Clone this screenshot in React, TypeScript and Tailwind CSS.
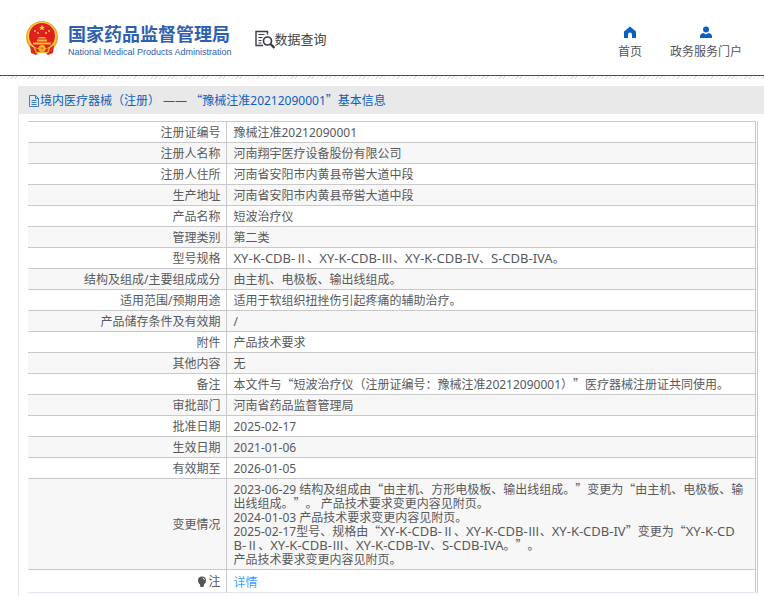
import { Fragment } from "react";
import type { ReactNode } from "react";

interface DetailRow {
  label: string;
  lines: string[];
}

const rows: DetailRow[] = [
  { label: "注册证编号", lines: ["豫械注准20212090001"] },
  { label: "注册人名称", lines: ["河南翔宇医疗设备股份有限公司"] },
  { label: "注册人住所", lines: ["河南省安阳市内黄县帝喾大道中段"] },
  { label: "生产地址", lines: ["河南省安阳市内黄县帝喾大道中段"] },
  { label: "产品名称", lines: ["短波治疗仪"] },
  { label: "管理类别", lines: ["第二类"] },
  { label: "型号规格", lines: ["XY-K-CDB-Ⅱ、XY-K-CDB-Ⅲ、XY-K-CDB-IV、S-CDB-IVA。"] },
  { label: "结构及组成/主要组成成分", lines: ["由主机、电极板、输出线组成。"] },
  { label: "适用范围/预期用途", lines: ["适用于软组织扭挫伤引起疼痛的辅助治疗。"] },
  { label: "产品储存条件及有效期", lines: ["/"] },
  { label: "附件", lines: ["产品技术要求"] },
  { label: "其他内容", lines: ["无"] },
  { label: "备注", lines: ["本文件与“短波治疗仪（注册证编号：豫械注准20212090001）”医疗器械注册证共同使用。"] },
  { label: "审批部门", lines: ["河南省药品监督管理局"] },
  { label: "批准日期", lines: ["2025-02-17"] },
  { label: "生效日期", lines: ["2021-01-06"] },
  { label: "有效期至", lines: ["2026-01-05"] },
  {
    label: "变更情况",
    lines: [
      "2023-06-29 结构及组成由“由主机、方形电极板、输出线组成。”变更为“由主机、电极板、输出线组成。”。 产品技术要求变更内容见附页。",
      "2024-01-03 产品技术要求变更内容见附页。",
      "2025-02-17型号、规格由“XY-K-CDB-Ⅱ、XY-K-CDB-Ⅲ、XY-K-CDB-IV”变更为“XY-K-CD\nB-Ⅱ、XY-K-CDB-Ⅲ、XY-K-CDB-IV、S-CDB-IVA。”。",
      "产品技术要求变更内容见附页。",
    ],
  },
];

// Curly quotes are full width in Chinese text, so they take the CJK face.
// Model codes are set one size up to sit level with the characters.
function Zh({ text }: { text: string }) {
  return (
    <>
      {text.split(/([“”Ⅱ]|[A-Z][A-Z-]*)/).map((part, i) => {
        if (part === "“" || part === "”" || part === "Ⅱ") {
          return (
            <span key={i} className="font-['Noto_Sans_CJK_SC',sans-serif] leading-[0px]">{part}</span>
          );
        }
        if (/^[A-Z]/.test(part)) {
          return <span key={i} className="text-[13px] leading-[0px]">{part}</span>;
        }
        return <Fragment key={i}>{part}</Fragment>;
      })}
    </>
  );
}

function Emblem() {
  return (
    <svg viewBox="0 0 34 36" className="w-[34px] h-9 shrink-0" aria-hidden="true">
      <circle cx="17" cy="17" r="16" fill="#efa51f" />
      <circle cx="17" cy="16.500" r="14.500" fill="#f8cf57" />
      <circle cx="17" cy="16" r="13" fill="#e0201b" />
      <path d="M17 5l.8 1.800 2 .2-1.500 1.300.5 2-1.800-1-1.800 1 .5-2L14.200 7l2-.2z" fill="#fbd84b" />
      <g fill="#fbd84b">
        <circle cx="10" cy="11" r=".9" />
        <circle cx="13" cy="13" r=".9" />
        <circle cx="21" cy="13" r=".9" />
        <circle cx="24" cy="11" r=".9" />
      </g>
      <path d="M14 17h6l1 1.500h-8zM12 19.500h10v2H12zM8 22.500h18v2H8z" fill="#f6b93a" />
      <path d="M5 25c3 3 7 4 12 4s9-1 12-4l-1 8-5 2-3-3h-6l-3 3-5-2z" fill="#dc2a1c" />
      <circle cx="17" cy="28.500" r="3.600" fill="#f3b632" />
      <circle cx="17" cy="28.500" r="1.600" fill="#e8821f" />
      <path d="M9.500 28l2 5M24.500 28l-2 5M12 32.500h10" stroke="#f3b632" strokeWidth="1.200" fill="none" />
    </svg>
  );
}

function SearchDocIcon() {
  return (
    <svg viewBox="0 0 20 20" className="w-5 h-5 shrink-0" fill="none" stroke="#3b3b4d" aria-hidden="true">
      <path d="M12.500 5.500V2.500H1v14h7" strokeWidth="1.400" />
      <path d="M3.500 5.500h6M3.500 8.500h4M3.500 11.500h3M3.500 14h3" strokeWidth="1.100" />
      <circle cx="12.500" cy="12" r="4" strokeWidth="1.700" />
      <path d="M15.500 15l4 4" strokeWidth="2.400" />
    </svg>
  );
}

function NavLink({ label, children }: { label: string; children: ReactNode }) {
  return (
    <a href="#" className="flex flex-col items-center gap-1 text-xs leading-5 text-[#555]">
      <svg viewBox="0 0 12 12" className="w-3 h-3" fill="#0a5fc0" aria-hidden="true">
        {children}
      </svg>
      {label}
    </a>
  );
}

export default function App() {
  return (
    <div className="min-h-screen overflow-hidden bg-white font-['Noto_Sans','Noto_Sans_CJK_SC',sans-serif] text-xs text-[#58595c] [text-spacing-trim:space-all]">
      <header className="flex items-start justify-between border-b border-[#0a5bbd] pl-[25px] pr-[22px] h-[76px]">
        <div className="flex items-start pt-5">
          <Emblem />
          <div className="ml-[9px] mt-[2px] text-[#2f60b0] whitespace-nowrap">
            <div className="text-[18px] leading-6 font-bold">国家药品监督管理局</div>
            <div className="text-[9px] leading-3 font-['Liberation_Sans',sans-serif]">
              National Medical Products Administration
            </div>
          </div>
          <a href="#" className="ml-[23px] mt-[9px] flex items-center text-[13px] leading-5 text-[#444] whitespace-nowrap">
            <SearchDocIcon />
            数据查询
          </a>
        </div>
        <nav className="flex gap-7 pt-[26px] whitespace-nowrap">
          <NavLink label="首页">
            <path d="M6 0.500L0 5.500v6.500h4V8.500a2 2 0 0 1 4 0V12h4V5.500z" />
          </NavLink>
          <NavLink label="政务服务门户">
            <circle cx="6" cy="3.500" r="3" />
            <path d="M0 12V10.500q0-3 3.500-3.500L6 8.500 8.500 7q3.500.5 3.500 3.500V12z" />
          </NavLink>
        </nav>
      </header>
      <div className="h-[3px] bg-[repeating-linear-gradient(135deg,#e4e4e4_0_1px,#fff_1px_3px)]" />

      <main className="ml-[18px] mt-[7px]">
        <h1 className="flex items-center h-7 pl-[10px] pt-[2px] bg-[#e9e9e9] border-b border-[#e6e6ee] text-xs text-[#0a5fc0] whitespace-pre">
          <svg viewBox="0 0 12 12" className="w-3 h-3" fill="none" stroke="#1662b8" aria-hidden="true">
            <path d="M1.500.5h6l3 3v8h-9zM7.500.5v3h3M3.500 5.500h5M3.500 7.500h5M3.500 9.500h5" strokeWidth=".8" />
          </svg>
          <span className="leading-5"><Zh text="境内医疗器械（注册） —— “豫械注准20212090001”基本信息" /></span>
        </h1>
        <div className="border-l border-[#e6e6ea] pt-[7px] pl-[9px] pr-[6px] pb-1">
          <div className="border-r border-[#c9c9cf] pr-px">
            <table className="w-full border-collapse border-t border-r border-[#c9c9cb]">
              <tbody>
                {rows.map((row) => (
                  <tr key={row.label} className="border-b border-[#c9c9cb] even:bg-[#f7f7f7]">
                    <th className="w-[198px] border-r border-[#c9c9cb] pt-1 pb-[2px] pr-[5px] text-right font-normal leading-[14px]">
                      {row.label}
                    </th>
                    <td className="pt-1 pb-[2px] pl-[7px] pr-[6px] leading-[14px] break-all whitespace-pre-line">
                      {row.lines.map((line) => (
                        <div key={line}><Zh text={line} /></div>
                      ))}
                    </td>
                  </tr>
                ))}
                <tr className="border-b border-[#e6e6f0]">
                  <th className="border-r border-[#c9c9cb] pt-[5px] pb-[3px] pr-[5px] font-normal leading-[14px]">
                    <span className="flex items-center justify-end">
                      <svg viewBox="0 0 12 12" className="w-3 h-3" aria-hidden="true">
                        <circle cx="6" cy="4.500" r="4" fill="#555" />
                        <path d="M3.500 7h5l-1 4h-3z" fill="#555" />
                        <path d="M6.500 2q2 .5 2 2" fill="none" stroke="#fff" strokeWidth=".8" />
                      </svg>
                      注
                    </span>
                  </th>
                  <td className="pt-[6px] pb-[2px] pl-[7px] pr-[6px] leading-[14px]">
                    <a href="#" className="text-[#409eff]">详情</a>
                  </td>
                </tr>
              </tbody>
            </table>
          </div>
        </div>
      </main>
    </div>
  );
}
